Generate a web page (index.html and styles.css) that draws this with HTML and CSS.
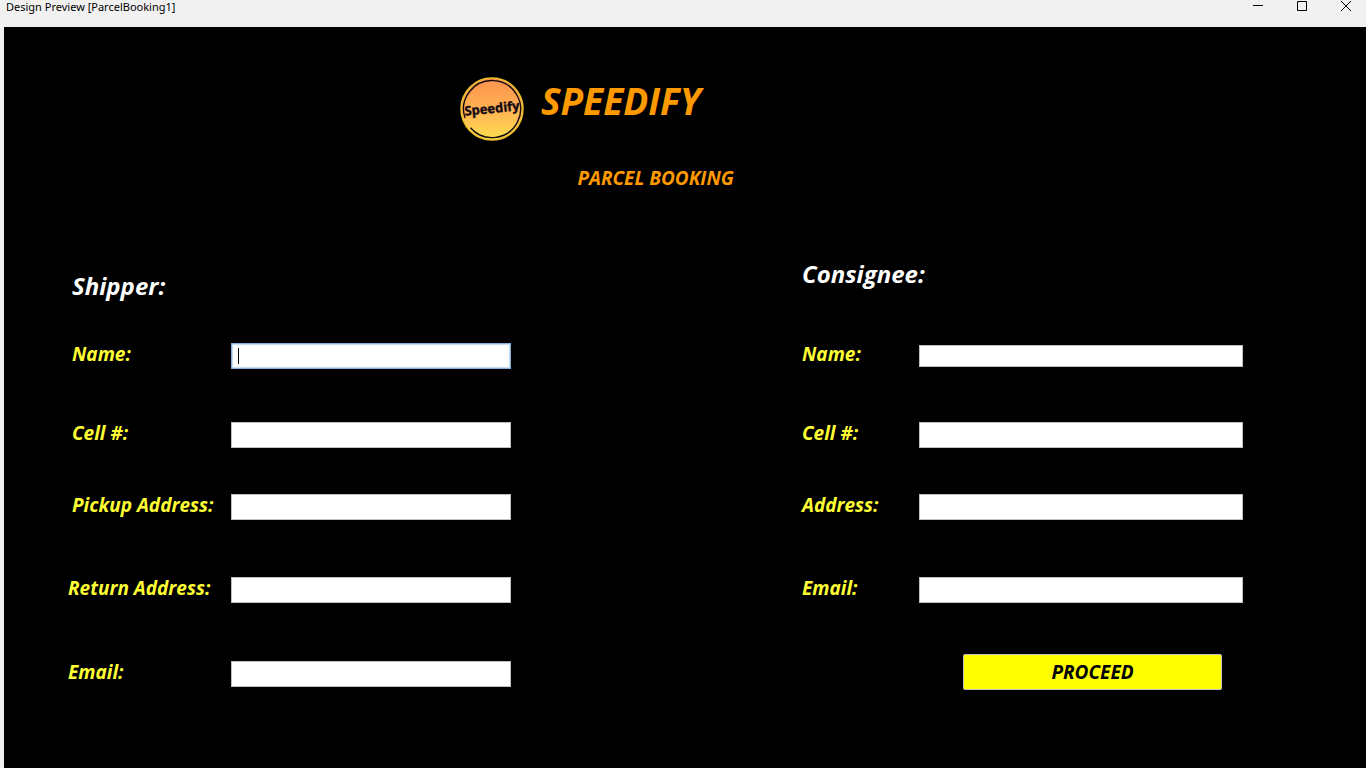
FILE: index.html
```html
<!DOCTYPE html>
<html lang="en">
<head>
<meta charset="utf-8">
<title>Design Preview [ParcelBooking1]</title>
<link rel="stylesheet" href="styles.css">
</head>
<body>
<header class="titlebar">
  <span class="window-title">Design Preview [ParcelBooking1]</span>
  <div class="window-controls">
    <button type="button" class="window-button" aria-label="Minimize"><svg width="12" height="12" viewBox="0 0 12 12"><path d="M1 5.500h10"/></svg></button>
    <button type="button" class="window-button" aria-label="Maximize"><svg width="12" height="12" viewBox="0 0 12 12"><path d="M1.500 1.500h9v9h-9z"/></svg></button>
    <button type="button" class="window-button" aria-label="Close"><svg width="12" height="12" viewBox="0 0 12 12"><path d="M1 1l10 10M11 1L1 11"/></svg></button>
  </div>
</header>
<main class="page">
  <div class="brand">
    <svg class="logo" width="66" height="66" viewBox="0 0 66 66" role="img" aria-label="Speedify logo">
      <defs>
        <linearGradient id="sun" x1="0" y1="0" x2="0" y2="1">
          <stop offset="0" stop-color="#ff924f"/>
          <stop offset=".5" stop-color="#ffb151"/>
          <stop offset="1" stop-color="#ffdf50"/>
        </linearGradient>
      </defs>
      <circle cx="33" cy="33" r="31" fill="url(#sun)" stroke="#ecc02c" stroke-width="1.500"/>
      <path d="M6 42A28.500 28.500 0 1 1 11.500 51.700" fill="none" stroke="#160c10" stroke-width="1.400"/>
      <text class="logo-text" x="33" y="37" text-anchor="middle" transform="rotate(-6 33 33)">Speedify</text>
    </svg>
    <h1 class="brand-name">SPEEDIFY</h1>
  </div>
  <h2 class="page-title">PARCEL BOOKING</h2>
  <form class="booking">
    <section class="party shipper">
      <h3 class="party-title">Shipper:</h3>
      <div class="fields">
        <div class="field indented"><label for="s-name">Name:</label><input id="s-name" class="current" type="text"></div>
        <div class="field indented"><label for="s-cell">Cell #:</label><input id="s-cell" type="text"></div>
        <div class="field indented"><label for="s-pickup">Pickup Address:</label><input id="s-pickup" type="text"></div>
        <div class="field"><label for="s-return">Return Address:</label><input id="s-return" type="text"></div>
        <div class="field"><label for="s-email">Email:</label><input id="s-email" type="text"></div>
      </div>
    </section>
    <section class="party consignee">
      <h3 class="party-title">Consignee:</h3>
      <div class="fields">
        <div class="field"><label for="c-name">Name:</label><input id="c-name" class="slim" type="text"></div>
        <div class="field"><label for="c-cell">Cell #:</label><input id="c-cell" type="text"></div>
        <div class="field"><label for="c-address">Address:</label><input id="c-address" type="text"></div>
        <div class="field"><label for="c-email">Email:</label><input id="c-email" type="text"></div>
        <button type="submit" class="proceed">PROCEED</button>
      </div>
    </section>
  </form>
</main>
</body>
</html>
```
FILE: styles.css
```css
* { box-sizing: border-box; }
body {
  margin: 0;
  min-height: 100vh;
  display: flex;
  flex-direction: column;
  background: #f1f1f1;
  font-family: "Segoe UI", "Open Sans", sans-serif;
}
h1, h2, h3 { margin: 0; }
.titlebar {
  display: flex;
  justify-content: space-between;
  align-items: flex-start;
  height: 27px;
  padding-left: 6px;
  color: #000;
  font: 11px/14px "Segoe UI", "Noto Sans", sans-serif;
}
.window-controls { display: flex; }
.window-button {
  width: 44px;
  height: 12px;
  padding: 0 0 0 4px;
  border: 0;
  background: none;
}
.window-button svg {
  display: block;
  margin: 0 auto;
  fill: none;
  stroke: #000;
}
.page {
  flex: 1;
  margin-left: 4px;
  padding-top: 49px;
  background: #000;
}
.brand {
  display: flex;
  gap: 16px;
  padding-left: 33.4%;
}
.logo-text {
  font: 700 13px "Open Sans", sans-serif;
  fill: #160c18;
  stroke: #160c18;
  stroke-width: 0.4px;
}
.brand-name {
  color: #ff9900;
  font-size: 37px;
  font-style: italic;
  line-height: 50px;
}
.page-title {
  margin-top: 24px;
  padding-left: 42.1%;
  color: #ff9900;
  font-size: 19px;
  font-style: italic;
  line-height: 24px;
}
.booking {
  display: grid;
  grid-template-columns: 443fr 441fr;
  column-gap: 291px;
  padding: 68px 123px 24px 64px;
}
.party-title {
  height: 85px;
  color: #fff;
  font: italic 700 24px/32px "Comic Sans MS", "Open Sans", sans-serif;
}
.shipper .party-title { padding: 12px 0 0 4px; }
.fields {
  display: grid;
  grid-template-rows: 79px 72px 83px 84px auto;
}
.consignee .fields { grid-template-rows: 79px 72px 83px 77px auto; }
.field {
  display: grid;
  grid-template-columns: 163px 1fr;
  align-items: center;
  height: 26px;
}
.consignee .field { grid-template-columns: 117px 1fr; }
.field label {
  padding-bottom: 4px;
  color: #ffff33;
  font: italic 700 19px/22px "Comic Sans MS", "Open Sans", sans-serif;
  white-space: nowrap;
}
.indented label { padding-left: 4px; }
.field input {
  width: 100%;
  height: 26px;
  padding: 2px 6px;
  border: 1px solid #c0c0c0;
  border-radius: 0;
  outline: none;
  background: #fff;
  font-size: 14px;
}
.field .slim { height: 22px; }
.field .current {
  border-color: #88aedb;
  box-shadow: inset 0 0 0 1px #c5dcf5;
  background: linear-gradient(#000, #000) 6px 4px / 1px 16px no-repeat #fff;
}
.proceed {
  width: 259px;
  height: 36px;
  margin-left: 161px;
  border: 1px solid #c0c0c0;
  border-radius: 2px;
  background: #ffff00;
  color: #000;
  font: italic 700 19px/24px "Segoe UI", "Open Sans", sans-serif;
}
```
